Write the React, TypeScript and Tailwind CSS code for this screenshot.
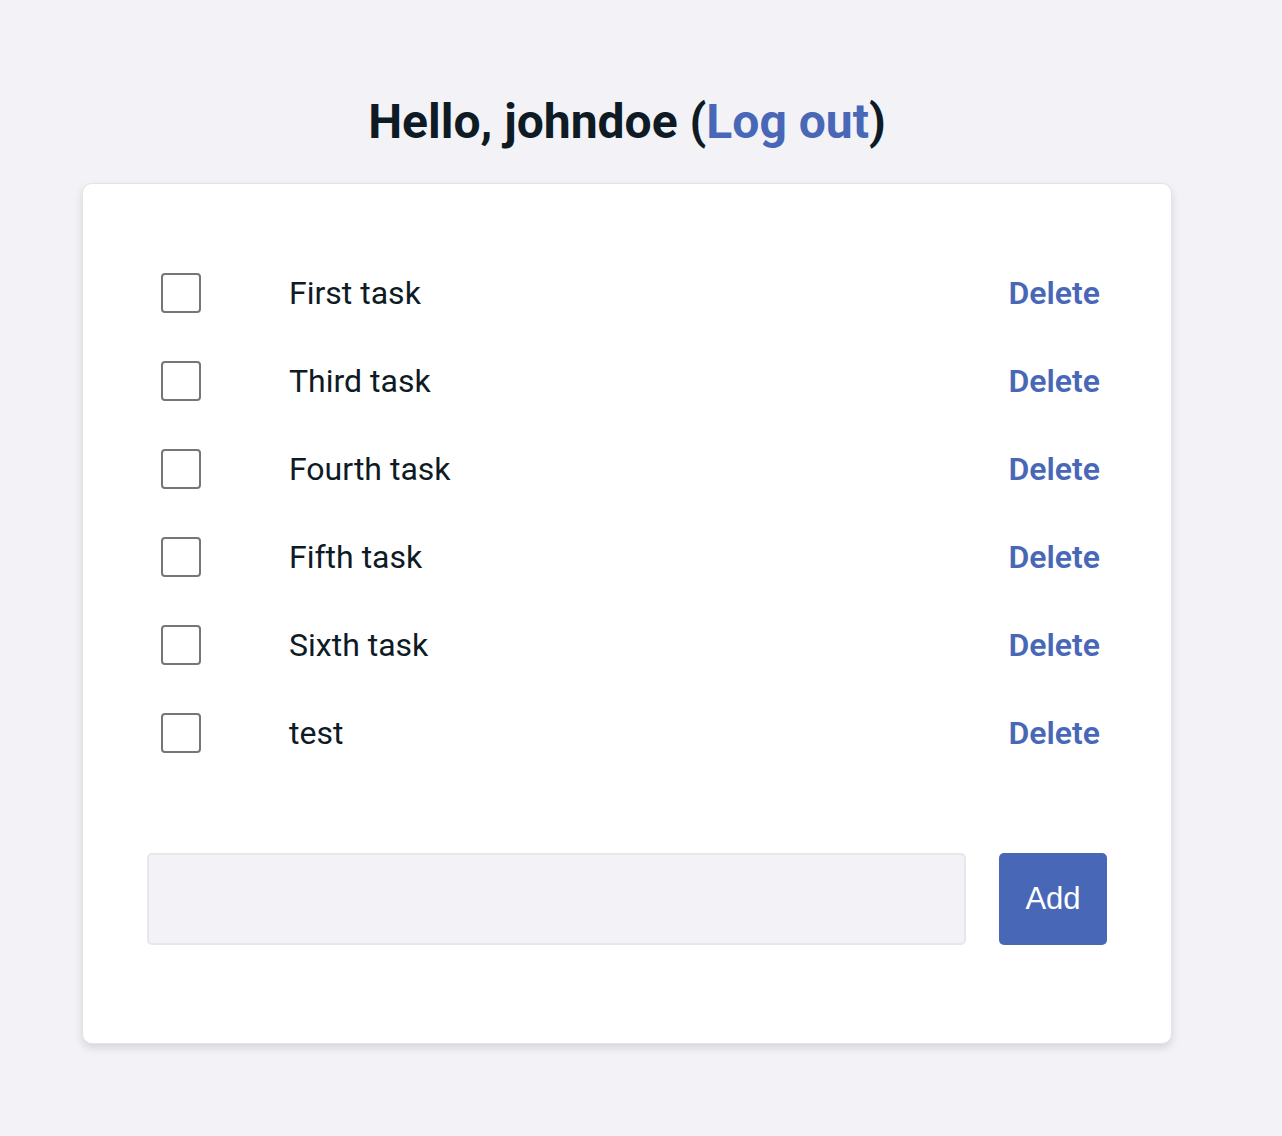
const tasks = ['First task', 'Third task', 'Fourth task', 'Fifth task', 'Sixth task', 'test']

export default function App() {
  return (
    <div className="min-h-[1136px] bg-[#f2f2f7] font-['Roboto',sans-serif] text-[#0e1b25]">
      <div className="ml-[82px] w-[1090px] pt-[92px]">
        <h1 className="text-center text-[48px] font-bold leading-[60px]">
          Hello, johndoe (<a className="text-[#4868b7]">Log out</a>)
        </h1>
        <div className="mt-[31px] h-[861px] rounded-[10px] border border-[#e3e3e8] bg-white shadow-[0_4px_8px_rgba(0,0,0,0.12)]">
          <ul className="pl-[78px] pr-[71px] pt-[65px]">
            {tasks.map((t) => (
              <li key={t} className="flex h-[88px] items-center">
                <input
                  type="checkbox"
                  className="h-[40px] w-[40px] appearance-none rounded-[4px] border-2 border-[#767676] bg-white"
                />
                <span className="ml-[88px] flex-1 text-[32px]">{t}</span>
                <button className="text-[32px] font-semibold text-[#4868b7]">Delete</button>
              </li>
            ))}
          </ul>
          <form className="mt-[76px] flex gap-[33px] px-[64px]">
            <input className="h-[92px] flex-1 rounded-[5px] border-2 border-[#e6e6eb] bg-[#f2f2f7]" />
            <button
              type="button"
              className="h-[92px] w-[108px] rounded-[5px] bg-[#4868b7] font-['Liberation_Sans',sans-serif] text-[31px] text-white"
            >
              Add
            </button>
          </form>
        </div>
      </div>
    </div>
  )
}
